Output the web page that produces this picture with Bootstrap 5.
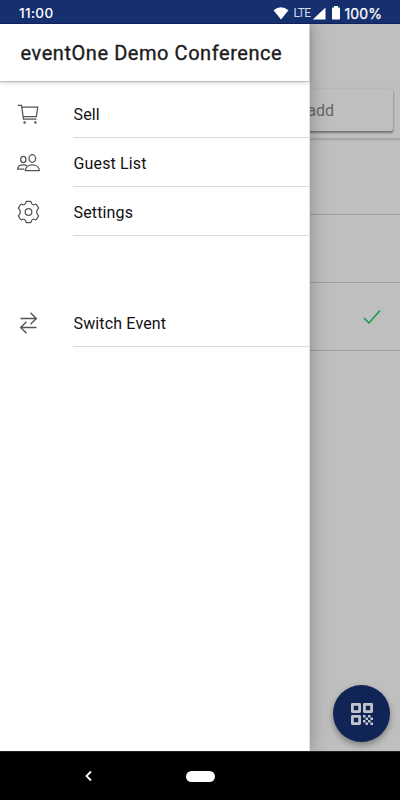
<!DOCTYPE html>
<html lang="en">
<head>
<meta charset="utf-8">
<meta name="viewport" content="width=device-width, initial-scale=1">
<title>eventOne Demo Conference</title>
<link href="https://cdn.jsdelivr.net/npm/bootstrap@5.3.0/dist/css/bootstrap.min.css" rel="stylesheet">
<style>
body{height:800px;font-family:Roboto,sans-serif;color:#111;background:#bfbfbf}
svg{display:block;flex:none}
.status{height:24px;background:#16306f;border-bottom:1px solid #10205c;color:#fff;padding:3px 18px 0 19px}
.clock{font:500 13.5px/21px Inter,sans-serif;letter-spacing:.35px}
.lte{font:400 12px/20px Roboto,sans-serif;color:#d5dbea;letter-spacing:-.65px;margin:0 2px 0 5px}
.battery{margin-left:6px}
.pct{font:400 14px/21px Inter,sans-serif;-webkit-text-stroke:.25px #fff;letter-spacing:.1px;margin-left:4px}
.stage{height:727px;background:#bfbfbf}
.topspace{height:57px}
.searchbar{height:58px;padding:8px 7px 8px 200px;border-bottom:1px solid #a5a5a5;box-shadow:0 1px 2px rgba(0,0,0,.15)}
.searchfield{height:42px;border-radius:2px;box-shadow:0 2px 2px rgba(0,0,0,.3),0 1px 3px rgba(0,0,0,.2);color:#666;font-size:16px;padding:1px 59px 0 0}
.guest{height:68px;border-bottom:1px solid #9f9f9f;padding-right:19px}
.guest.first{height:76px}
.fab{right:10px;bottom:9px;width:57px;height:57px;background:#102455;box-shadow:0 3px 6px rgba(0,0,0,.35)}
.drawer{width:310px;background:#fff;box-shadow:0 0 18px rgba(0,0,0,.3);border-right:1px solid #e0e0e0}
.drawer-head{height:57px;padding-left:20.5px;font-size:20px;font-weight:400;-webkit-text-stroke:.35px #1c1c1c;letter-spacing:.56px;color:#1c1c1c;box-shadow:0 1px 1px rgba(0,0,0,.16),0 2px 5px rgba(0,0,0,.16)}
.entry{height:49px;color:#111;font-size:16px;letter-spacing:.15px}
.entry:hover{color:#111}
.entry-icon{width:73px;padding-left:16px;color:#555}
.entry-label{border-bottom:1px solid #dadada;height:49px;padding:3px 0 0 .5px}
.gap-row{height:62px}
.list-top{height:8px}
.sysnav{height:49px;background:#000;border-top:1px solid #222;padding-left:84px}
.home{width:29px;height:11px;background:#fff;margin-left:93px}
</style>
<script src="https://cdn.jsdelivr.net/npm/bootstrap@5.3.0/dist/js/bootstrap.bundle.min.js"></script>
</head>
<body class="d-flex flex-column overflow-hidden">
<header class="status d-flex align-items-center">
  <span class="clock me-auto">11:00</span>
  <svg width="16" height="13" viewBox="0 0 16 13"><path d="M.5 3.200Q8-2.800 15.500 3.200L8 12.500z" fill="#fff"/></svg>
  <span class="lte">LTE</span>
  <svg width="14" height="13" viewBox="0 0 14 13"><path d="M13.500.5v12H.8z" fill="#fff"/></svg>
  <svg class="battery" width="8" height="14" viewBox="0 0 8 14"><path d="M2 0h4v1.400h1.200q.8 0 .8.8v10.600q0 .8-.8.8H.8q-.8 0-.8-.8V2.200q0-.8.8-.8H2z" fill="#fff"/></svg>
  <span class="pct">100%</span>
</header>
<main class="stage position-relative overflow-hidden">
  <section>
    <div class="topspace"></div>
    <div class="searchbar"><div class="searchfield d-flex align-items-center justify-content-end">add</div></div>
    <div class="guest first"></div>
    <div class="guest"></div>
    <div class="guest d-flex align-items-center justify-content-end"><svg width="18" height="18" viewBox="0 0 18 18" fill="none" stroke="#0f9d46" stroke-width="1.500"><path d="M1 10l5 5L17 2.500"/></svg></div>
  </section>
  <button class="fab btn rounded-circle position-absolute p-0 border-0 d-flex align-items-center justify-content-center" aria-label="Scan code">
    <svg width="22" height="22" viewBox="0 0 22 22" fill="none" stroke="#c2c4ca" stroke-width="2.800" stroke-linejoin="round"><path d="M1.400 1.400h7.200v7.200H1.400zM13.400 1.400h7.200v7.200h-7.200zM1.400 13.400h7.200v7.200H1.400z"/><path fill="#c2c4ca" stroke="none" d="M12 12h2.500v2.500H12zM17 12h2.500v2.500H17zM14.500 14.500H17V17h-2.500zM19.500 14.500H22V17h-2.500zM12 17h2.500v2.500H12zM17 17h2.500v2.500H17zM14.500 19.500H17V22h-2.500zM19.500 19.500H22V22h-2.500z"/></svg>
  </button>
  <aside class="drawer position-absolute top-0 start-0 h-100">
    <h1 class="drawer-head d-flex align-items-center m-0">eventOne Demo Conference</h1>
    <div class="list-top"></div>
    <nav>
      <a class="entry d-flex text-decoration-none" href="#">
        <span class="entry-icon d-flex align-items-center"><svg width="24" height="24" viewBox="0 0 24 24" fill="none" stroke="currentColor" stroke-width="1.250"><path d="M1.800 3.400H5.500L7.500 17.200h13M5.800 5.200h16L20.300 14.700H7.200"/><circle cx="8.600" cy="20.500" r="1.200" fill="currentColor" stroke="none"/><circle cx="19.400" cy="20.500" r="1.200" fill="currentColor" stroke="none"/></svg></span>
        <span class="entry-label d-flex align-items-center flex-grow-1">Sell</span>
      </a>
      <a class="entry d-flex text-decoration-none" href="#">
        <span class="entry-icon d-flex align-items-center"><svg width="25" height="24" viewBox="0 0 25 24" fill="none" stroke="currentColor" stroke-width="1.300"><ellipse cx="16.300" cy="7.500" rx="3.300" ry="3.800"/><ellipse cx="7.300" cy="8.500" rx="2.600" ry="3.100"/><path stroke-linejoin="round" d="M9.300 19.600c.2-3.500 3.200-5.800 7-5.800s6.900 2.300 7.100 5.800zM8.300 18.200H1.500c.3-2.600 2.500-4.300 5.700-4.300 1.500 0 2.900.4 3.800 1.200"/></svg></span>
        <span class="entry-label d-flex align-items-center flex-grow-1">Guest List</span>
      </a>
      <a class="entry d-flex text-decoration-none" href="#">
        <span class="entry-icon d-flex align-items-center"><svg width="25" height="24" viewBox="0 0 25 24" fill="none" stroke="currentColor" stroke-width="1.300" stroke-linejoin="round"><circle cx="12.500" cy="12" r="3.300"/><path d="M10.600 1.300h3.800q.6 0 .7.700c.2 2.500 2.100 3.500 4.200 2.300q.7-.4 1.100.2l2.100 3.300q.3.600-.3 1c-2 1.300-2 5.100 0 6.400q.6.400.3 1l-2.100 3.300q-.4.600-1.100.2c-2.100-1.200-4-.2-4.200 2.300q-.1.700-.7.700h-3.800q-.6 0-.7-.7c-.2-2.500-2.100-3.500-4.200-2.300q-.7.400-1.100-.2l-2.100-3.300q-.3-.6.300-1c2-1.300 2-5.100 0-6.400q-.6-.4-.3-1l2.100-3.300q.4-.6 1.100-.2c2.100 1.200 4 .2 4.200-2.300q.1-.7.700-.7z"/></svg></span>
        <span class="entry-label d-flex align-items-center flex-grow-1">Settings</span>
      </a>
      <div class="gap-row"></div>
      <a class="entry d-flex text-decoration-none" href="#">
        <span class="entry-icon d-flex align-items-center"><svg width="24" height="24" viewBox="0 0 24 24" fill="none" stroke="currentColor" stroke-width="1.400"><path d="M4.500 7.500H20M14.500 1.800L20.300 7.500l-5.800 5.700M20.500 16.500H5M10.500 10.800L4.700 16.500l5.800 5.700"/></svg></span>
        <span class="entry-label d-flex align-items-center flex-grow-1">Switch Event</span>
      </a>
    </nav>
  </aside>
</main>
<footer class="sysnav d-flex align-items-center">
  <svg width="9" height="12" viewBox="0 0 9 12" fill="none" stroke="#fff" stroke-width="1.800"><path d="M7 1.500L2.500 6 7 10.500"/></svg>
  <div class="home rounded-pill"></div>
</footer>
</body>
</html>
